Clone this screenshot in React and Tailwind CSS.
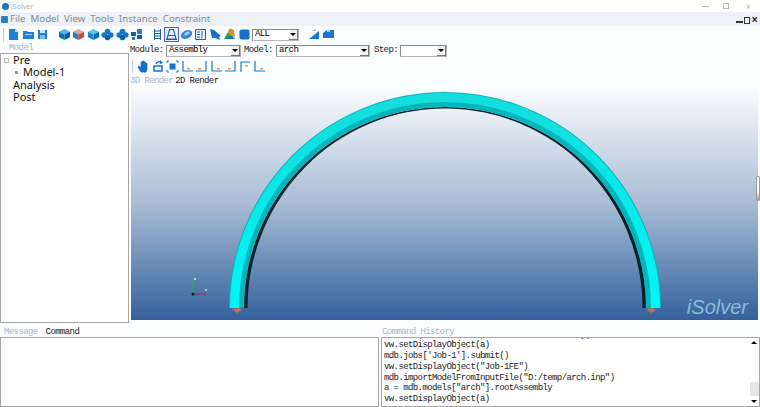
import React from 'react';

const mono = "font-['Liberation_Mono',monospace] text-[9px] tracking-[-0.6px]";

// TOOLBAR ICONS
const Svg = ({ children, w = 13 }) => (
    <svg width={w} height="13" viewBox="0 0 13 13" className="shrink-0">{children}</svg>
);

const Doc = () => (
    <Svg><path d="M2 1h6l3 3v8H2z" fill="#1e7fd6" /><path d="M8 1l3 3H8z" fill="#bcdcf5" /></Svg>
);
const Open = () => (
    <Svg><path d="M1 3h4l1 1h6v7H1z" fill="#1e7fd6" /><path d="M3 6h7v1H3z" fill="#a9d2f2" /></Svg>
);
const Save = () => (
    <Svg><path d="M2 2h9v9H2z" fill="#1e7fd6" /><path d="M4 2h5v3H4z" fill="#cfe6f8" /><path d="M4 7h5v4H4z" fill="#7dbbec" /></Svg>
);
const Cube = ({ top = '#4fb0ea', left = '#0b6fb8', right = '#075a9a' }) => (
    <Svg>
        <path d="M6.5 1l5.5 2.8-5.5 2.8L1 3.8z" fill={top} />
        <path d="M1 3.8l5.500 2.8V12L1 9.200z" fill={left} />
        <path d="M12 3.8L6.500 6.600V12l5.500-2.800z" fill={right} />
    </Svg>
);
const Blob = () => (
    <Svg>
        <circle cx="6.5" cy="3.5" r="2.8" fill="#0f78c8" />
        <circle cx="3.2" cy="7" r="2.8" fill="#0f78c8" />
        <circle cx="9.8" cy="7" r="2.8" fill="#0f78c8" />
        <circle cx="6.5" cy="9.5" r="2.8" fill="#0a5fa5" />
    </Svg>
);
const Grid4 = () => (
    <Svg>
        <path d="M7 1h5v5H7z" fill="#1e7fd6" />
        <path d="M1 4h5v4H1z" fill="#0f5ea8" />
        <path d="M7 7h5v4H7z" fill="#0f5ea8" />
        <path d="M2 9h3v3H2z" fill="#1e7fd6" />
    </Svg>
);
const Ladder = () => (
    <Svg>
        <path d="M3.500 1v11M9.500 1v11M3.500 3h6M3.500 5.500h6M3.500 8h6M3.500 10.500h6" stroke="#1b5f9e" strokeWidth="1" fill="none" />
    </Svg>
);
const Trapeze = () => (
    <Svg>
        <path d="M4.500 1.500h4L11 11H2zM3.500 7.500h6" stroke="#1b5f9e" strokeWidth="1.100" fill="none" />
        <path d="M1 11.500h11" stroke="#1b5f9e" strokeWidth="1" />
    </Svg>
);
const Disc = () => (
    <Svg>
        <ellipse cx="6.500" cy="6.500" rx="6" ry="4" transform="rotate(-25 6.500 6.500)" fill="#2f8bd8" />
        <ellipse cx="7" cy="5.500" rx="3" ry="1.500" transform="rotate(-25 7 5.500)" fill="#a8d4f4" />
    </Svg>
);
const Panel = () => (
    <Svg>
        <path d="M1.500 1.500h10v10h-10z" fill="#eaf3fb" stroke="#1b5f9e" />
        <path d="M3 4h3M3 6.500h3M3 9h3M8 3v7" stroke="#1b5f9e" />
    </Svg>
);
const Pointer = () => (
    <Svg><path d="M1 1l4 1 7 6-2 1 1 3-5-2-3 0z" fill="#1470c8" /></Svg>
);
const Cloud = () => (
    <Svg>
        <path d="M1 11l4-7 3 3 4 4z" fill="#2b9a4a" />
        <path d="M5 3a3 3 0 0 1 6 2l1 4-5-1z" fill="#e08a22" />
        <path d="M3 11l5-4 4 4z" fill="#1f73c4" />
    </Svg>
);
const Rounded = () => (
    <Svg><rect x="1.500" y="1.500" width="10" height="10" rx="2" fill="#1470c8" /></Svg>
);
const Slope = ({ flip }) => (
    <Svg>
        <path d={flip ? 'M1 5l4-3h7v8H1z' : 'M1 11l10-8v8z'} fill="#1a76d2" />
        <path d={flip ? 'M5 2h3v2H5z' : 'M4 3l4-2v2z'} fill="#a8c8ea" />
    </Svg>
);
const Hand = () => (
    <Svg>
        <path d="M4 12L1 7l1-1 2 2V2h1.500v4V1h1.500v5V2h1.500v4.500V3.500H10V9l-1 3z" fill="#1470c8" stroke="#1470c8" strokeWidth=".8" />
    </Svg>
);
const Rotate = () => (
    <Svg>
        <path d="M2 6h8v5H2z" fill="none" stroke="#1470c8" strokeWidth="1.500" />
        <path d="M4 4a3 3 0 0 1 5-1.500" stroke="#1470c8" strokeWidth="1.300" fill="none" />
        <path d="M8 0l3 3-3 1z" fill="#1470c8" />
    </Svg>
);
const Fit = () => (
    <Svg>
        <path d="M3.500 3.500h6v6h-6z" fill="#1470c8" />
        <path d="M1 3V1h2M10 1h2v2M12 10v2h-2M3 12H1v-2" stroke="#1470c8" fill="none" />
    </Svg>
);
const Axes = ({ variant }) => {
    const paths = {
        a: 'M2 1v10h10',
        b: 'M11 1v10H1',
        c: 'M2 1v10h10',
        d: 'M11 1v10H1',
        e: 'M11 2H2v10',
        f: 'M2 1v10h10',
    };
    const spot = { a: [6, 8], b: [3, 8], c: [7, 8], d: [4, 8], e: [6, 5], f: [7, 8] }[variant];
    return (
        <Svg>
            <path d={paths[variant]} stroke="#1a76d2" strokeWidth="1.200" fill="none" />
            <path d={`M${spot[0]} ${spot[1]}h3v1.500h-3z`} fill="#ee9a4a" />
        </Svg>
    );
};

const Sep = () => <span className="w-px h-[14px] bg-[#c9ced6] shrink-0" />;

// CLASSIC COMBO BOX
const Combo = ({ value, className }) => (
    <div className={`h-[12px] flex items-center justify-between bg-white border-l border-t border-l-[#8c8c8c] border-t-[#8c8c8c] border-r border-b border-r-[#b4b4b4] border-b-[#b4b4b4] pl-[2px] ${className}`}>
        <span className={mono}>{value}</span>
        <span className="w-[9px] h-[10px] bg-[#f0f0f0] border-r border-b border-[#777] flex items-center justify-center">
            <span className="w-0 h-0 border-x-[3px] border-x-transparent border-t-[3px] border-t-black" />
        </span>
    </div>
);

const history = [
    'mdb.Job(name="Job-1", model=a.rootAssembly)',
    'vw.setDisplayObject(a)',
    "mdb.jobs['Job-1'].submit()",
    'vw.setDisplayObject("Job-1FE")',
    'mdb.importModelFromInputFile("D:/temp/arch.inp")',
    'a = mdb.models["arch"].rootAssembly',
    'vw.setDisplayObject(a)',
];

const menu = ['File', 'Model', 'View', 'Tools', 'Instance', 'Constraint'];

export default function App() {
    return (
        <div className="w-[760px] h-[407px] overflow-hidden flex flex-col bg-[#fbfcfe] font-['Noto_Sans',sans-serif]">

            {/* TITLE BAR */}
            <div className="h-[12px] bg-white flex items-center pl-[2px] pr-[9px] shrink-0">
                <span className="w-[7px] h-[7px] rounded-full bg-[#1677c9]" />
                <span className="ml-[2px] text-[7px] leading-none text-[#a9adb3]">iSolver</span>
                <span className="ml-auto w-[7px] h-px bg-[#b8b8b8]" />
                <span className="ml-[14px] w-[6px] h-[6px] border border-[#b8b8b8]" />
                <span className="ml-[17px] text-[9px] leading-none text-[#b0b0b0]">×</span>
            </div>

            {/* MENU BAR */}
            <div className="h-[14px] bg-[#edf1f6] flex items-center pl-[1px] pr-[2px] shrink-0">
                <span className="w-[7px] h-[7px] rounded-[1px] bg-[#2a7fc9]" />
                <div className="flex gap-[5px] ml-[2px] text-[9.700px] leading-none text-[#858b93]">
                    {menu.map((m) => <span key={m}>{m}</span>)}
                </div>
                <div className="ml-auto flex items-end gap-[1px] text-[#333] leading-none">
                    <span className="w-[7px] h-[2px] bg-[#333] mb-[1px]" />
                    <span className="w-[6px] h-[7px] border border-[#333]" />
                    <span className="text-[12px] leading-[9px] font-bold">×</span>
                </div>
            </div>

            {/* MAIN TOOLBAR */}
            <div className="h-[17px] flex items-center pl-[3px] shrink-0">
                <Sep />
                <div className="flex gap-[1.500px] ml-[3px]"><Doc /><Open /><Save /></div>
                <div className="ml-[5px]"><Sep /></div>
                <div className="flex gap-[1.500px] ml-[3.500px]">
                    <Cube />
                    <Cube top="#e8a090" left="#2b7fc0" right="#c44a40" />
                    <Cube top="#5cc0f0" left="#1a86d0" right="#0a6ab0" />
                    <Blob />
                    <Blob />
                    <Grid4 />
                </div>
                <div className="ml-[6px]"><Sep /></div>
                <div className="flex gap-[1.500px] ml-[1.500px] items-center">
                    <Ladder />
                    <div className="w-[15px] h-[15px] -mx-px border border-[#5a5ad0] bg-[#e4eefa] flex items-center justify-center"><Trapeze /></div>
                    <Disc />
                    <Panel />
                    <Pointer />
                    <Cloud />
                    <Rounded />
                </div>
                <Combo value="ALL" className="w-[47px] ml-[1.500px]" />
                <div className="ml-[6px]"><Sep /></div>
                <div className="flex gap-[1.500px] ml-[2.500px]"><Slope /><Slope flip /></div>
            </div>

            {/* MAIN AREA */}
            <div className="flex h-[281px] shrink-0">

                {/* MODEL TREE */}
                <div className="w-[129px] flex flex-col shrink-0">
                    <span className={`${mono} h-[10px] leading-[11px] pl-[9px] text-[#a9b4d0]`}>Model</span>
                    <div className="h-[270px] border border-[#a6a6a6] bg-white text-[11px] leading-[12.300px] text-[#111]">
                        <div className="flex items-center pl-[3px]">
                            <span className="w-[5px] h-[5px] border border-[#bbb] mr-[4px]" />Pre
                        </div>
                        <div className="flex items-center pl-[14px]">
                            <span className="w-[3px] h-[3px] bg-[#999] mr-[5px]" />Model-1
                        </div>
                        <div className="pl-[12px]">Analysis</div>
                        <div className="pl-[12px]">Post</div>
                    </div>
                </div>

                {/* RENDER AREA */}
                <div className="flex-1 flex flex-col pl-[1px] min-w-0">
                    <div className="h-[13px] mt-[1px] flex items-center shrink-0">
                        <span className={`${mono} w-[36px] text-[#222]`}>Module:</span>
                        <Combo value="Assembly" className="w-[75px]" />
                        <span className={`${mono} w-[32px] ml-[3px] text-[#222]`}>Model:</span>
                        <Combo value="arch" className="w-[94px]" />
                        <span className={`${mono} w-[26px] ml-[4px] text-[#222]`}>Step:</span>
                        <Combo value="" className="w-[47px]" />
                    </div>
                    <div className="h-[16px] mt-[1px] flex items-center gap-[2px] pl-[2px] shrink-0">
                        <Sep />
                        <div className="flex gap-[1.500px] ml-[2px]">
                            <Hand /><Rotate /><Fit />
                            <Axes variant="a" /><Axes variant="b" /><Axes variant="c" />
                            <Axes variant="d" /><Axes variant="e" /><Axes variant="f" />
                        </div>
                    </div>
                    <div className={`${mono} h-[13px] leading-[14px] flex gap-[2px] shrink-0`}>
                        <span className="text-[#a9b4d0]">3D Render</span>
                        <span className="text-[#222]">2D Render</span>
                    </div>

                    <div className="relative h-[233px] pl-[1px]">
                        <div className="relative w-[627px] h-[233px] bg-gradient-to-b from-[#fbfcfe] via-[#a9bdd4] via-50% to-[#33619b]">
                            <svg width="627" height="233" viewBox="0 0 627 233" className="block">
                                <defs>
                                    <linearGradient id="tube" gradientUnits="userSpaceOnUse" x1="0" x2="0" y1="6" y2="221">
                                        <stop offset="0" stopColor="#14dcdc" />
                                        <stop offset="1" stopColor="#00f6f6" />
                                    </linearGradient>
                                </defs>
                                <g className="blur-[0.5px]">
                                    {/* dark crescent: thin at the crown, wider down the legs */}
                                    <path d="M113 221 A201 201 0 0 1 515 221 L511.500 221 A197.500 199.500 0 0 0 116.500 221 z" fill="#04222c" />
                                    <path d="M105.500 221 A208.500 208.500 0 0 1 522.500 221" fill="none" stroke="#06b4bc" strokeWidth="15" />
                                    <path d="M103.500 221 A210.500 210.500 0 0 1 524.500 221" fill="none" stroke="url(#tube)" strokeWidth="9" />
                                    <path d="M101 222l5 4 5-3-3-2zM515 222l5 4 5-3-3-2z" fill="#b9754f" />
                                </g>
                                {/* small axis triad */}
                                <path d="M62 207v-14" stroke="#2fa56a" strokeWidth="1.500" />
                                <path d="M62 207h12" stroke="#8a3a5a" strokeWidth="1" />
                                <circle cx="62" cy="207" r="1.500" fill="#0c1c30" />
                                <circle cx="74" cy="207" r="1.300" fill="#a33a4a" />
                                <circle cx="64" cy="192" r="1" fill="#d8e4f0" />
                                <circle cx="75" cy="203" r="1" fill="#d8e4f0" />
                            </svg>
                            <span className="absolute right-[10px] bottom-[1px] text-[20px] leading-[24px] italic text-[#8dbcdc] font-['Liberation_Sans',sans-serif]">iSolver</span>
                        </div>
                        {/* SPLITTER HANDLE */}
                        <div className="absolute right-0 top-[89px] w-[4px] h-[25px] rounded-[1px] border border-[#9a9a9a] bg-gradient-to-b from-white from-60% to-[#d98a5a]" />
                    </div>
                </div>
            </div>

            {/* BOTTOM PANELS */}
            <div className="flex gap-[2px] mt-[3px] flex-1 min-h-0">
                <div className="w-[379px] flex flex-col shrink-0">
                    <div className={`${mono} h-[10px] leading-[10px] pl-[4px] flex gap-[8px]`}>
                        <span className="text-[#a9b4d0]">Message</span>
                        <span className="text-[#222]">Command</span>
                    </div>
                    <div className="flex-1 bg-white border border-[#a6a6a6]" />
                </div>
                <div className="flex-1 flex flex-col min-w-0">
                    <div className={`${mono} h-[10px] leading-[10px] pl-[1px] text-[#a9b4d0]`}>Command History</div>
                    <div className="flex-1 bg-white border border-[#a6a6a6] flex min-h-0 overflow-hidden">
                        <div className={`${mono} flex-1 flex flex-col justify-end leading-[10.800px] pl-[2px] pb-[1px] text-[#222] overflow-hidden`}>
                            {history.map((line, i) => <div key={i} className="shrink-0 whitespace-pre first:-mb-px">{line}</div>)}
                        </div>
                        <div className="w-[10px] flex flex-col justify-between items-center py-[3px] relative">
                            <span className="w-0 h-0 border-x-[3px] border-x-transparent border-b-[3px] border-b-black" />
                            <span className="absolute bottom-[10px] right-[0px] w-[9px] h-[14px] bg-[#e6e6e6]" />
                            <span className="w-0 h-0 border-x-[3px] border-x-transparent border-t-[3px] border-t-black" />
                        </div>
                    </div>
                </div>
            </div>
        </div>
    );
}
